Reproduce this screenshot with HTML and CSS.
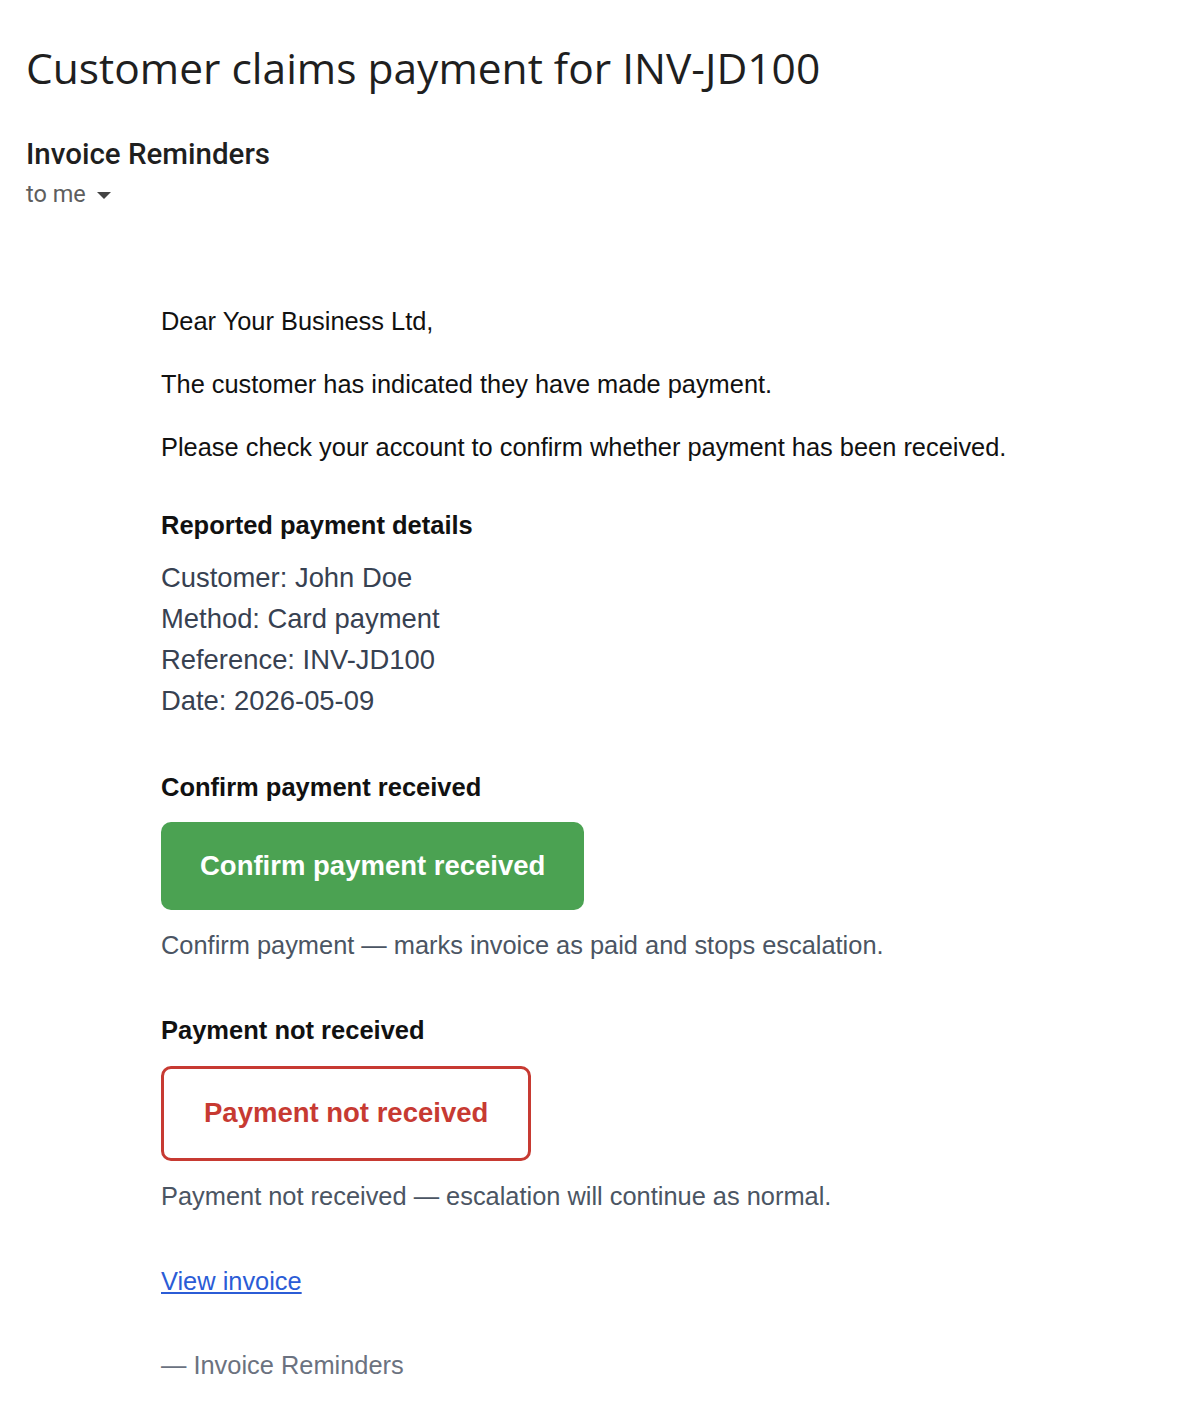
FILE: index.html
```html
<!DOCTYPE html>
<html lang="en">
<head>
    <meta charset="UTF-8">
    <meta name="viewport" content="width=device-width, initial-scale=1.0">
    <title>Customer claims payment for INV-JD100</title>
    <link rel="stylesheet" href="styles.css">
</head>
<body>
    <header class="mail-header">
        <h1 class="subject">Customer claims payment for INV-JD100</h1>
        <div class="sender">
            <div class="sender-name">Invoice Reminders</div>
            <div class="recipient">to me <span class="caret"></span></div>
        </div>
    </header>

    <main class="mail-body">
        <p>Dear Your Business Ltd,</p>
        <p>The customer has indicated they have made payment.</p>
        <p>Please check your account to confirm whether payment has been received.</p>

        <!-- Payment details -->
        <section class="details">
            <h2>Reported payment details</h2>
            <div class="detail-list">
                <div>Customer: John Doe</div>
                <div>Method: Card payment</div>
                <div>Reference: INV-JD100</div>
                <div>Date: 2026-05-09</div>
            </div>
        </section>

        <!-- Confirm -->
        <section class="action action-first">
            <h2>Confirm payment received</h2>
            <a href="#" class="btn btn-confirm">Confirm payment received</a>
            <p class="note">Confirm payment — marks invoice as paid and stops escalation.</p>
        </section>

        <!-- Not received -->
        <section class="action">
            <h2>Payment not received</h2>
            <a href="#" class="btn btn-reject">Payment not received</a>
            <p class="note">Payment not received — escalation will continue as normal.</p>
        </section>

        <p class="link-row"><a href="#" class="invoice-link">View invoice</a></p>

        <p class="signature">— Invoice Reminders</p>
    </main>
</body>
</html>
```

FILE: styles.css
```css
/* General */
body {
    margin: 0;
    padding: 0;
    background-color: #fff;
    font-family: 'Liberation Sans', Arial, sans-serif;
    color: #111;
}

/* Header */
.mail-header {
    padding: 40px 26px 0;
}

.subject {
    margin: 0;
    font-family: 'Open Sans', sans-serif;
    font-weight: 400;
    font-size: 42.5px;
    line-height: 56px;
    color: #1f1f1f;
}

.sender {
    margin-top: 41px;
}

.sender-name {
    font-family: Roboto, sans-serif;
    font-weight: 500;
    font-size: 29.5px;
    line-height: 34px;
    color: #1f1f1f;
}

.recipient {
    font-family: Roboto, sans-serif;
    font-size: 23.5px;
    line-height: 46px;
    color: #5e5e5e;
}

.caret {
    display: inline-block;
    width: 0;
    height: 0;
    margin-left: 5px;
    border-left: 7.5px solid transparent;
    border-right: 7.5px solid transparent;
    border-top: 7.5px solid #444;
    vertical-align: middle;
}

/* Body */
.mail-body {
    padding: 90px 0 40px 161px;
    font-size: 25.4px;
}

.mail-body p {
    margin: 0 0 35px;
    line-height: 28px;
}

.mail-body h2 {
    margin: 0;
    font-size: 25.5px;
    font-weight: 700;
    line-height: 28px;
    color: #111;
}

.details {
    margin-top: 50px;
}

.detail-list {
    margin-top: 18px;
    font-size: 27.4px;
    line-height: 41px;
    color: #374151;
}

.action {
    margin-top: 57px;
}

.action-first {
    margin-top: 52px;
}

.btn {
    display: inline-block;
    border-radius: 10px;
    font-weight: 700;
    font-size: 27.5px;
    line-height: 32px;
    text-decoration: none;
}

.btn-confirm {
    margin-top: 21px;
    padding: 28px 39px;
    background-color: #4ba252;
    color: #fff;
}

.btn-reject {
    margin-top: 22px;
    padding: 28px 40px 29px;
    border: 3px solid #c73a32;
    color: #c73a32;
}

.mail-body .note {
    margin-top: 21px;
    color: #4b5563;
}

.mail-body .link-row {
    margin-top: 57px;
}

.invoice-link {
    color: #2b5cd6;
}

.mail-body .signature {
    margin-top: 56px;
    color: #6b7280;
}
```
